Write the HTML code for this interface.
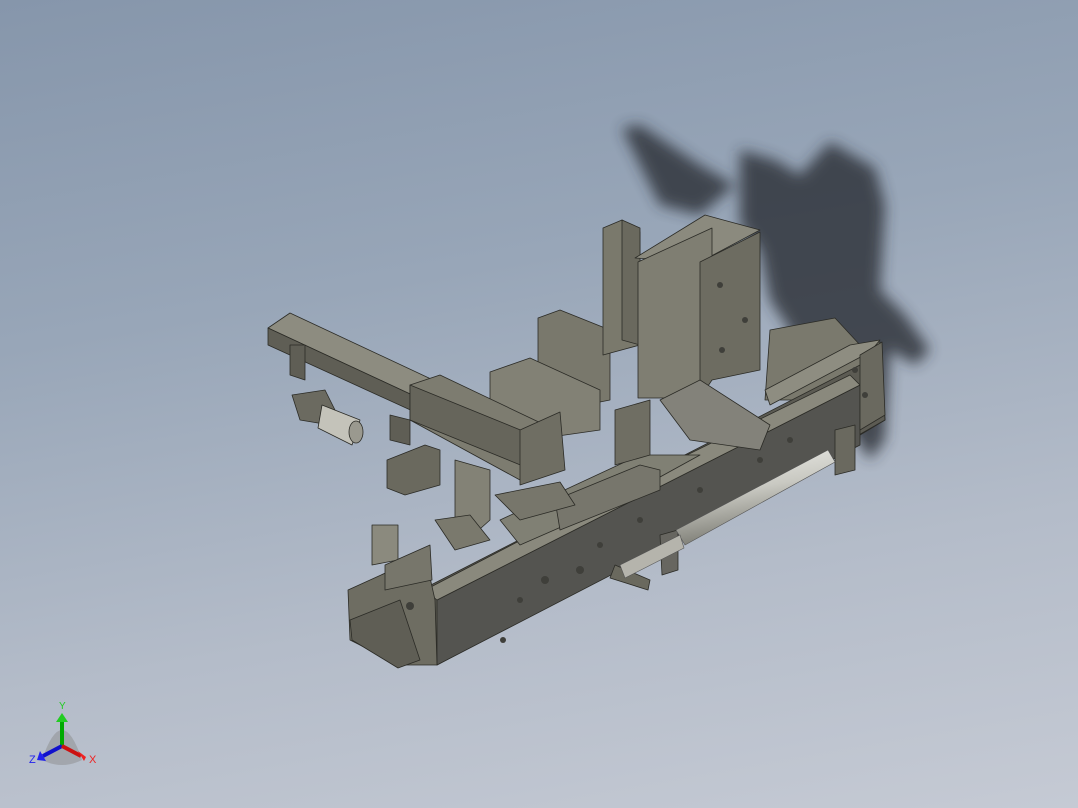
<!DOCTYPE html>
<html><head><style>
html,body{margin:0;padding:0;width:1078px;height:808px;overflow:hidden}
body{background:linear-gradient(170deg,#8696ab 0%,#98a6b8 35%,#b4bcc9 70%,#c5cad4 100%);font-family:"Liberation Sans",sans-serif}
svg{position:absolute;left:0;top:0}
</style></head><body>
<svg width="1078" height="808" viewBox="0 0 1078 808">
<defs>
<filter id="b" x="-20%" y="-20%" width="140%" height="140%"><feGaussianBlur stdDeviation="7"/></filter>
<linearGradient id="rod" x1="0" y1="0" x2="0.3" y2="1"><stop offset="0" stop-color="#f2f2ee"/><stop offset="0.5" stop-color="#c9c9c2"/><stop offset="1" stop-color="#77776f"/></linearGradient>
</defs>
<!-- shadow -->
<g fill="#2a2e36" opacity="0.8" filter="url(#b)">
<polygon points="622,128 640,125 700,165 735,185 700,215 660,205 645,175"/>
<polygon points="740,150 775,160 800,175 830,142 875,168 885,205 880,290 905,315 930,350 915,365 890,350 885,440 870,460 850,430 800,380 790,330 770,300 760,250 740,225"/>
</g>
<g stroke="#2b2b26" stroke-width="0.8" stroke-linejoin="round">
<!-- right end block -->
<polygon points="770,330 835,318 860,345 880,342 885,420 860,435 800,400 765,400" fill="#7a796d"/>
<polygon points="765,390 850,345 880,340 870,352 770,405" fill="#8e8d81"/>
<!-- main beam -->
<polygon points="425,588 640,478 860,365 880,345 885,420 850,440 640,555 437,665 425,655" fill="#5c5b53"/>
<polygon points="437,600 860,385 860,445 640,560 437,665" fill="#545450"/>
<polygon points="425,590 437,600 860,385 850,375 640,478" fill="#8a897d"/>
<polygon points="500,520 640,455 700,455 600,510 520,545" fill="#808074"/>
<polygon points="555,500 640,465 660,470 660,490 560,530" fill="#77766c"/>
<!-- right end plate -->
<polygon points="860,355 882,342 885,415 860,430" fill="#6a695f"/>
<polygon points="835,430 855,425 855,470 835,475" fill="#6a695f"/>
<!-- left end -->
<polygon points="348,590 425,555 435,600 437,665 400,665 350,640" fill="#6e6d62"/>
<polygon points="350,620 400,600 420,660 398,668 352,640" fill="#5f5e55"/>
<polygon points="372,525 398,525 398,560 372,565" fill="#8b8a7e"/>
<polygon points="385,565 430,545 432,580 385,590" fill="#77766b"/>
<!-- middle plates -->
<polygon points="538,318 560,310 610,330 610,400 560,410 538,385" fill="#79786c"/>
<polygon points="490,372 530,358 600,390 600,430 530,440 490,410" fill="#828175"/>
<polygon points="603,228 622,220 640,232 640,345 603,355" fill="#7a796c"/>
<polygon points="622,220 640,228 640,345 622,340" fill="#6a695e"/>
<!-- tall box -->
<polygon points="635,258 705,215 760,230 700,262" fill="#8b8a7e"/>
<polygon points="638,262 712,228 712,378 685,398 638,398" fill="#7f7e72"/>
<polygon points="700,262 760,232 760,370 712,380 700,398" fill="#6d6c61"/>
<!-- right slide -->
<polygon points="660,400 700,380 770,425 760,450 690,440" fill="#83827a"/>
<!-- left arm -->
<polygon points="268,328 290,313 540,430 520,445" fill="#8d8c80"/>
<polygon points="268,328 520,445 520,460 268,345" fill="#5f5e55"/>
<polygon points="410,385 440,375 545,425 545,470 520,480 410,420" fill="#7d7c70"/>
<polygon points="410,385 545,440 545,475 410,420" fill="#66655b"/>
<polygon points="520,430 560,412 565,470 520,485" fill="#6f6e63"/>
<polygon points="615,410 650,400 650,455 615,465" fill="#6f6e63"/>
<polygon points="290,345 305,345 305,380 290,375" fill="#5f5e55"/>
<polygon points="390,415 410,420 410,445 390,440" fill="#5f5e55"/>
<!-- cylinder/camera -->
<polygon points="292,395 325,390 335,410 330,425 300,420" fill="#6b6a60"/>
<polygon points="322,405 360,420 352,445 318,428" fill="#c4c3ba"/>
<ellipse cx="356" cy="432" rx="7" ry="11" fill="#9a998f"/>
<!-- small box -->
<polygon points="387,460 425,445 440,450 440,485 405,495 387,488" fill="#6a695e"/>
<!-- bracket -->
<polygon points="455,460 490,470 490,520 462,545 455,530" fill="#838276"/>
<polygon points="435,520 470,515 490,540 455,550" fill="#7a796d"/>
<polygon points="495,495 560,482 575,505 520,520" fill="#77766b"/>
<!-- bottom blocks -->
<polygon points="615,565 650,580 648,590 610,578" fill="#6a695e"/>
<polygon points="660,535 678,530 678,570 662,575" fill="#676660"/>
</g>
<!-- rod -->
<polygon points="676,530 828,450 835,462 685,545" fill="url(#rod)" stroke="#555" stroke-width="0.6"/>
<polygon points="620,565 680,535 684,548 625,578" fill="#b5b4ac" stroke="#555" stroke-width="0.6"/>
<!-- holes -->
<g fill="#3f3f3a">
<circle cx="720" cy="285" r="3"/><circle cx="722" cy="350" r="3"/><circle cx="745" cy="320" r="3"/>
<circle cx="545" cy="580" r="4"/><circle cx="600" cy="545" r="3"/><circle cx="640" cy="520" r="3"/>
<circle cx="700" cy="490" r="3"/><circle cx="760" cy="460" r="3"/><circle cx="790" cy="440" r="3"/>
<circle cx="503" cy="640" r="3"/><circle cx="520" cy="600" r="3"/><circle cx="580" cy="570" r="4"/>
<circle cx="855" cy="370" r="3"/><circle cx="865" cy="395" r="3"/><circle cx="410" cy="606" r="4"/>
</g>
<!-- axis triad -->
<g>
<path d="M42 760 Q62 700 82 760 Q62 770 42 760Z" fill="#888" opacity="0.45"/>
<line x1="62" y1="746" x2="62" y2="720" stroke="#0a0" stroke-width="4"/>
<polygon points="56,722 68,722 62,713" fill="#2c2"/>
<line x1="62" y1="746" x2="43" y2="756" stroke="#11c" stroke-width="4"/>
<polygon points="40,751 46,761 37,760" fill="#22e"/>
<line x1="62" y1="746" x2="81" y2="756" stroke="#c11" stroke-width="4"/>
<polygon points="78,751 84,761 86,757" fill="#e22"/>
<text x="59" y="709" font-size="10" fill="#2c2">Y</text>
<text x="29" y="763" font-size="11" fill="#22e">Z</text>
<text x="89" y="763" font-size="11" fill="#e22">X</text>
</g>
</svg>
</body></html>
